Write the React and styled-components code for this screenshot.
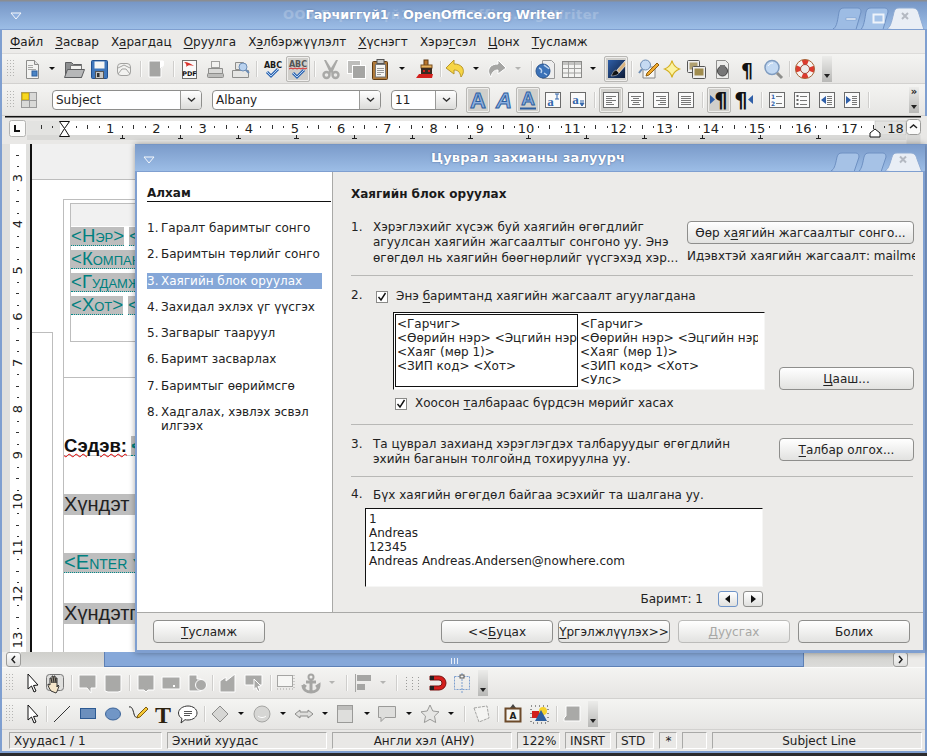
import React from 'react';
import styled, { createGlobalStyle } from 'styled-components';

const Global = createGlobalStyle`
  html, body { margin: 0; padding: 0; background: #2b2b2d; }
  body { width: 927px; height: 756px; overflow: hidden; font-family: "DejaVu Sans", sans-serif; font-size: 12px; color: #222; }
  #root { width: 927px; height: 756px; position: relative; overflow: hidden; }
  * { box-sizing: border-box; }
`;

const Win = styled.div`
  width: 927px; height: 753px; display: flex; flex-direction: column;
  background: #ecebe9; border: solid #7f9fd0; border-width: 0 2px 2px 2px; position: relative;
`;
const TitleBar = styled.div`
  height: 30px; margin: 0 -2px; flex: none; position: relative; overflow: hidden;
  background: linear-gradient(#8a8d92 0, #8a8d92 1px, #7797c6 2px, #9cbde6 100%);
  border-bottom: 1px solid #7f9fd0;
  display: flex; align-items: center; justify-content: center;
`;
const TitleText = styled.span`
  color: #fff; font-weight: bold; font-size: 12.8px; white-space: nowrap;
  margin-left: -60px; text-shadow: 0 0 2px rgba(70,100,150,.7);
`;
const TitleGhost = styled.span`
  position: absolute; left: 283px; top: 7px; color: #fff; opacity: .2; font-weight: bold; font-size: 13px;
  letter-spacing: .5px; white-space: nowrap;
`;
const MenuGlyph = styled.svg`
  position: absolute; left: ${p => p.$x}px; top: 12px;
`;
const Tabs = styled.svg`
  position: absolute; right: 0; bottom: 0;
`;
const Menu = styled.div`
  height: 24px; flex: none; display: flex; align-items: center; gap: 12px; padding: 1px 0 0 8px;
  background: #ecebe9; border-bottom: 1px solid #dcdbd9; white-space: nowrap; color: #1c1c1c;
`;
const U = styled.span`text-decoration: underline; text-underline-offset: 1.5px;`;
const ToolRow = styled.div`
  height: ${p => p.$h}px; flex: none; display: flex; align-items: center; padding-left: 0;
  background: linear-gradient(#f4f4f2, #e6e5e3); border-bottom: 1px solid #d2d1cf;
`;
const Slot = styled.div`
  width: ${p => p.$w}px; flex: none; margin-left: ${p => p.$ml}px; display: flex; align-items: center; justify-content: center;
`;
const Pressed = styled.div`
  width: 24px; height: 26px; flex: none; display: flex; align-items: center; justify-content: center;
  background: ${p => (p.$on ? '#d0cfcb' : 'transparent')};
  border: ${p => (p.$on ? '1px solid #b9b8b5' : '1px solid transparent')}; border-radius: 2px;
  box-shadow: ${p => (p.$on ? 'inset 0 0 0 1px #efeeec' : 'none')};
  svg { flex: none; overflow: visible; }
`;
const Sep = styled.div`width: 1px; height: 16px; background: #cfcecc; box-shadow: 1px 0 0 #fbfbfa;`;
const Grip = styled.div`
  width: 7px; height: 18px;
  background-image: radial-gradient(circle at .5px .5px, #b4b4b2 .7px, transparent .8px);
  background-size: 3px 3px;
`;
const Overflow = styled.div`
  width: 10px; height: 26px; position: relative; display: flex; flex-direction: column; justify-content: flex-end; align-items: center;
  background: linear-gradient(#ececea, #b8b8b6); padding-bottom: 4px;
  &::after { content: ""; border: 3px solid transparent; border-top: 4px solid #222; border-bottom: 0; }
`;
const OverflowMore = styled(Overflow)`
  justify-content: space-between; padding-top: 0;
`;
const Chevrons = styled.span`font-size: 10px; font-weight: bold; line-height: 10px; color: #222;`;
const Combo = styled.div`
  display: flex; width: ${p => p.$w}px; height: 20px; flex: none;
  border: 1px solid #8e8e8c; border-radius: 4px; background: #fff; overflow: hidden;
`;
const ComboText = styled.div`
  flex: 1; padding-left: 3px; line-height: 18px; font-size: 12px; color: #222; white-space: nowrap; overflow: hidden;
`;
const ComboBtn = styled.div`
  width: 21px; flex: none; border-left: 1px solid #9a9a98; display: flex; align-items: center; justify-content: center;
  background: linear-gradient(#fff, #dcdcda);
`;
const RulerRow = styled.div`height: 28px; flex: none; background: #e9e8e6; margin-left: 0; position: relative;`;
const RulerSvg = styled.svg`display: block;`;
const DocRow = styled.div`height: 508px; flex: none; display: flex; background: #e4e4e2;`;
const DocView = styled.div`flex: 1; background: #fff; border-left: 2px solid #111; overflow: hidden; position: relative;`;
const TopBand = styled.div`height: 36px; background: #f0f0f0; border-bottom: 1px solid #bdbdbd;`;
const PageWrap = styled.div`display: flex;`;
const Gutter = styled.div`
  width: 22px; height: 330px; margin-top: 152px; border: solid #bdbdbd; border-width: 1px 1px 0 0;
`;
const Page = styled.div`
  margin: 19px 0 0 10px; width: 900px; height: 460px; border: solid #bdbdbd; border-width: 1px 0 0 1px; overflow: hidden;
`;
const AddressBox = styled.div`
  margin: 3px 0 0 6px; width: 400px; height: 139px; border: 1px solid #bdbdbd; padding-top: 23px;
  background: linear-gradient(#f1f1f1 0, #f1f1f1 22px, #fff 22px);
  display: flex; flex-direction: column; gap: 4px;
`;
const FieldLine = styled.div`display: flex; gap: 5px; height: 19px;`;
const Field = styled.span`
  background: #bebebe; color: #00807f; font-family: "Liberation Sans", sans-serif; font-size: 18.5px; font-variant: small-caps;
  height: ${p => p.$h || 19}px; line-height: ${p => (p.$h || 19) - 1}px; white-space: nowrap; border-bottom: 1px dotted #008a8a;
`;
const AddressEnd = styled.div`margin-top: 35px; height: 1px; background: #bdbdbd;`;
const SubjectRow = styled.div`
  margin-top: 58px; height: 20px; display: flex; gap: 4px; border-bottom: 1px solid #c8c8c8; font-family: "Liberation Sans", sans-serif;
  font-size: 18.5px; font-weight: bold; color: #111; line-height: 19px;
`;
const Wavy = styled.span`text-decoration: underline wavy #e00000 1px; text-underline-offset: 1px;`;
const TextLine = styled.div`
  height: 21px; margin-top: ${p => p.$mt}px; background: #bebebe; font-family: "Liberation Sans", sans-serif; font-size: 20px; line-height: 21px;
  color: #222; white-space: nowrap;
`;
const EnterLine = styled.div`
  height: 20px; margin-top: ${p => p.$mt}px; background: #bebebe; font-family: "Liberation Sans", sans-serif; font-size: 20px; font-variant: small-caps; line-height: 19px;
  color: #00807f; white-space: nowrap; border-bottom: 1px dotted #008a8a;
`;
const HScroll = styled.div`height: 16px; flex: none; display: flex; padding: 0 0 0 4px; background: #ecebe9; border-bottom: 1px solid #fafaf9;`;
const ScrollBtn = styled.div`
  width: 15px; height: 15px; flex: none; border: 1px solid #9b9b99; border-radius: 3px; background: linear-gradient(#fff, #dededc);
  display: flex; align-items: center; justify-content: center;
`;
const ScrollTrack = styled.div`width: ${p => p.$w}px; flex: none; height: 15px; background: linear-gradient(#cfcfcb, #dcdcda);`;
const ScrollThumb = styled.div`
  width: ${p => p.$w}px; flex: none; height: 15px; background: #86a8d9; border: solid #5d80b5; border-width: 0 1px 1px 1px;
  display: flex; align-items: center; justify-content: center; gap: 2px; padding-top: 3px;
`;
const GripLine = styled.i`display: block; width: 1px; height: 6px; background: #e8eef8;`;
const StatusBar = styled.div`
  height: 21px; flex: none; display: flex; gap: 5px; align-items: center; padding: 0 6px 0 7px; background: #e9e8e6;
`;
const Cell = styled.div`
  width: ${p => p.$w}px; flex: none; height: 17px; border: 1px solid; border-color: #a9a9a7 #fff #fff #a9a9a7;
  padding-left: ${p => p.$pl || 4}px; line-height: 16px; font-size: 12px; white-space: nowrap; color: #222; overflow: hidden;
  text-align: ${p => p.$center ? 'center' : 'left'};
`;

/* ---------- dialog ---------- */
const Dialog = styled.div`
  position: absolute; left: 133px; top: 144px; width: 790px; height: 509px; background: #ecebe9;
  border: solid #7f9fd0; border-width: 0 2px 3px 2px; display: flex; flex-direction: column;
  box-shadow: 0 0 6px rgba(0,0,0,.35);
`;
const DialogTitle = styled.div`
  height: 28px; flex: none; margin: 0 -2px; position: relative; display: flex; align-items: center; justify-content: center;
  background: linear-gradient(#6f8fbf 0, #7b9bca 1px, #9cbde6 100%); border-bottom: 1px solid #7f9fd0;
`;
const DialogTitleText = styled.span`
  color: #fff; font-weight: bold; font-size: 13px; letter-spacing: .2px; margin-left: -4px; text-shadow: 0 0 2px rgba(50,80,130,.8);
`;
const DialogBody = styled.div`flex: 1; display: flex; min-height: 0;`;
const StepsPanel = styled.div`
  width: 196px; flex: none; background: #fff; border-right: 1px solid #a9a9a7; padding: 14px 0 0 10px;
`;
const StepsTitle = styled.div`
  font-weight: bold; line-height: 15px; height: 16px; border-bottom: 1px solid #111; width: 184px; color: #1a1a1a;
`;
const StepList = styled.div`margin-top: 18px; width: 175px; display: flex; flex-direction: column; gap: 10.25px;`;
const Step = styled.div`
  display: flex; line-height: 16px; min-height: 16px;
  background: ${p => (p.$on ? '#85a7d8' : 'transparent')}; color: ${p => (p.$on ? '#fff' : '#222')};
`;
const StepNum = styled.span`width: 14px; flex: none;`;
const StepText = styled.span`line-height: 14.5px; padding-top: 1px; flex: 1;`;
const Content = styled.div`flex: 1; padding: 14px 10px 0 18px; min-width: 0; color: #222;`;
const Heading = styled.div`font-weight: bold; line-height: 16px; color: #1a1a1a;`;
const Section = styled.div`
  height: ${p => p.$h}px; flex: none; padding-top: ${p => p.$pt}px; display: flex; align-items: flex-start;
`;
const Block = styled.div`padding-top: ${p => p.$pt}px; height: ${p => p.$h}px;`;
const Num = styled.div`width: ${p => p.$w || 22}px; flex: none; line-height: 15.5px;`;
const Para = styled.div`width: ${p => p.$w}px; flex: none; line-height: 15.4px; white-space: nowrap;`;
const Side = styled.div`width: 228px; flex: none; margin-left: ${p => p.$ml}px; padding-top: 1px;`;
const Btn = styled.div`
  width: ${p => p.$w}px; height: 23px; flex: none; display: flex; align-items: center; justify-content: center;
  margin-top: ${p => p.$mt || 0}px;
  border: 1px solid ${p => (p.$off ? '#bcbcba' : '#8e8e8c')}; border-radius: 4px; white-space: nowrap; overflow: hidden;
  background: linear-gradient(#fff, #e2e2e0); color: ${p => (p.$off ? '#a8a8a6' : '#222')};
`;
const Clip = styled.div`margin-top: 4px; white-space: nowrap; overflow: hidden; line-height: 16px;`;
const Rule = styled.div`height: 1px; background: #b8b8b6;`;
const CheckRow = styled.div`
  display: flex; align-items: center; gap: 8px; margin-left: ${p => p.$ml || 0}px; margin-top: ${p => p.$mt || 0}px; line-height: 16px;
`;
const Check = styled.div`
  width: 12px; height: 12px; flex: none; border: 1px solid #8a8a88; background: #fff; margin-top: 2px; display: flex; align-items: center; justify-content: center;
`;
const PreviewRow = styled.div`display: flex; align-items: flex-end; gap: 14px; margin: 8px 0 0 42px;`;
const Preview = styled.div`
  width: ${p => p.$w}px; height: ${p => p.$h}px; flex: none; background: #fff; overflow: hidden;
  border: 1px solid; border-color: #111 #f6f6f5 #f6f6f5 #111;
  display: flex; line-height: 14px; white-space: nowrap;
`;
const RecordPreview = styled(Preview)`margin: 5px 0 0 14px;`;
const AddressCard = styled.div`
  width: ${p => p.$w}px; flex: none; height: ${p => p.$h}px; margin: 1px 0 0 ${p => p.$ml}px; padding: 2px 0 0 1px; overflow: hidden;
  border: ${p => (p.$sel ? '1px solid #111' : '1px solid transparent')};
`;
const Record = styled.div`margin: 0; padding: 3px 0 0 3px;`;
const NavRow = styled.div`
  width: 412px; display: flex; justify-content: flex-end; align-items: center; margin-top: 4px; height: 16px;
`;
const NavLabel = styled.span`margin-right: 15px; line-height: 16px;`;
const NavBtn = styled.div`
  width: 20px; height: 16px; margin-left: ${p => p.$ml || 0}px; border: 1px solid ${p => p.$focus ? '#6f94c8' : '#8e8e8c'}; border-radius: 3px;
  background: linear-gradient(#fff, #e0e0de); display: flex; align-items: center; justify-content: center;
`;
const Footer = styled.div`
  height: 38px; flex: none; border-top: 1px solid #a9a9a7; display: flex; align-items: center; padding: 0 13px 0 16px; gap: 8px; background: #ecebe9;
`;
const FooterGap = styled.div`flex: 1;`;
const FooterNarrow = styled.div`margin-left: -3px;`;

/* ---------- icons ---------- */
const G = { fill: '#a9a9a7', stroke: '#fff', strokeWidth: 1 };
const txt = { fontFamily: '"DejaVu Sans", sans-serif', fontWeight: 'bold' };
const aProps = { fontFamily: '"Liberation Sans", sans-serif', fontWeight: 'bold', fontSize: 22, fill: '#8db0e0', stroke: '#2e5f9f', strokeWidth: 1, textAnchor: 'middle' };
const lines = (arr, color = '#777') => arr.map(([x1, y1, x2], i) => <line key={i} x1={x1} y1={y1 + .5} x2={x2} y2={y1 + .5} stroke={color} />);
const boxed = (ch) => <><rect x="4.5" y="4.5" width="15" height="15" fill="#fafafa" stroke="#6b6b6b" />{ch}</>;
const GrayBlock = ({ d }) => <path d={d} {...G} />;

const icons = {
  drop: <path d="M9 10h6l-3 3z" fill="#111" />,
  dropOff: <path d="M9 10h6l-3 3z" fill="#b4b4b2" />,
  doc: <><path d="M6.5 3.5h8l4 4v14h-12z" fill="#f3f3f1" stroke="#8c8c8a" /><path d="M14.5 3.5v4h4" fill="#ddd" stroke="#8c8c8a" />{lines([[8, 8, 13], [8, 10, 13], [8, 12, 16]], '#a8a8a6')}<rect x="12" y="14" width="5" height="5" fill="#4a84c4" stroke="#2c5f9e" /></>,
  open: <><path d="M3.5 5.5h6l2 2h8v13h-16z" fill="#8d8f90" stroke="#5d5e60" /><path d="M8.5 8.5h11v5h-11z" fill="#f2f2f0" stroke="#777" /><path d="M2.5 20.5l3-8h17l-3 8z" fill="#b6b7b8" stroke="#5d5e60" /></>,
  save: <><rect x="4.5" y="3.5" width="16" height="18" rx="1" fill="#3f77bc" stroke="#22518f" /><rect x="7.5" y="4.5" width="10" height="7" fill="#f6f6f4" /><rect x="8.5" y="14.5" width="8" height="7" fill="#c8c8c6" stroke="#555" /><rect x="10" y="16" width="2.5" height="4" fill="#333" /></>,
  mail: <><rect x="5.5" y="6.5" width="13" height="12" rx="3.5" fill="#f2f2f0" stroke="#a2a2a0" /><path d="M6 11l6-3 6 3M6 17l4-5h4l4 5" fill="none" stroke="#a2a2a0" /></>,
  edit: <><path d="M5 4h14v5l-2 3v8H5z" fill="#a5a5a3" stroke="#fff" /><path d="M16 4h4v4l-4 4z" fill="#fff" /></>,
  pdf: <><rect x="5.5" y="3.5" width="14" height="18" fill="#fafafa" stroke="#6f6f6d" /><path d="M7 5c4 0 7 2 10 4-4-1-6-1-8 1 1-2 0-4-2-5z" fill="#d9332c" /><text x="12.5" y="19" fontSize="6.5" textAnchor="middle" fill="#111" style={txt}>PDF</text></>,
  print: <><rect x="8.5" y="4.5" width="8" height="6" fill="#f2f2f0" stroke="#a0a09e" /><path d="M5.5 11.5h14v6h-14z" fill="#dadad8" stroke="#8e8e8c" /><rect x="4.5" y="16.5" width="16" height="4" rx="1" fill="#bdbdbb" stroke="#8e8e8c" /></>,
  preview: <><path d="M7.5 5.5h8v7h-8zM4.5 13.5h16v7h-16z" fill="#e6e6e4" stroke="#8e8e8c" /><circle cx="15" cy="10" r="4" fill="#b9d2ef" stroke="#6d8db5" /><path d="M18 13l3 3" stroke="#6d8db5" strokeWidth="2" /></>,
  spell: <><text x="12" y="11" fontSize="8" textAnchor="middle" fill="#1a1a1a" style={txt}>ABC</text><path d="M6 15l4 4 7-7" fill="none" stroke="#2d66b3" strokeWidth="3" /><path d="M6 15l4 4 7-7" fill="none" stroke="#b9d4f2" strokeWidth="1" /></>,
  autospell: <><text x="12" y="10" fontSize="8" textAnchor="middle" fill="#555" style={txt}>ABC</text><path d="M3 12l2-1 2 1 2-1 2 1 2-1 2 1 2-1 2 1 2-1" fill="none" stroke="#d22" /><path d="M7 16l4 4 7-7" fill="none" stroke="#2d66b3" strokeWidth="3" /><path d="M7 16l4 4 7-7" fill="none" stroke="#b9d4f2" strokeWidth="1" /></>,
  cut: <><path d="M7 3l5 8 5-8h2l-5 11 1 2-2 2-1-3-1 3-2-2 1-2L5 3z" fill="#a9a9a7" /><circle cx="7.5" cy="18" r="3" fill="none" stroke="#a9a9a7" strokeWidth="2.4" /><circle cx="16.5" cy="18" r="3" fill="none" stroke="#a9a9a7" strokeWidth="2.4" /></>,
  copy: <><rect x="3.5" y="3.5" width="13" height="13" fill="#bdbdbb" stroke="#fff" /><rect x="8.5" y="8.5" width="13" height="13" fill="#a5a5a3" stroke="#fff" /></>,
  paste: <><rect x="4.5" y="4.5" width="15" height="18" rx="1" fill="#b07a3a" stroke="#5e3b14" /><rect x="7.5" y="7.5" width="10" height="12.5" fill="#f6f6f4" stroke="#777" /><rect x="9" y="2.5" width="7" height="4" fill="#c7c7c5" stroke="#555" />{lines([[9, 11, 16], [9, 13, 16], [9, 15, 16], [9, 17, 13]], '#999')}</>,
  brush: <><rect x="11" y="3" width="4" height="6" fill="#b8762f" stroke="#5e3b14" /><rect x="8" y="8" width="11" height="3" fill="#e8b25e" stroke="#7a5020" /><rect x="8" y="11" width="11" height="6" fill="#3a2a20" /><path d="M3 21l3-4h14l-1 4z" fill="#d3201d" /><rect x="10" y="13" width="2" height="2" fill="#d3201d" /><rect x="15" y="13" width="2" height="2" fill="#d3201d" /></>,
  undo: <path d="M11 3L3 11l8 6v-4c4 0 6 2 7 7 3-4 3-7 1-10-2-2-4-3-8-3z" fill="#f6d545" stroke="#b8962a" />,
  redo: <path d="M13 3l8 8-8 6v-4c-4 0-6 2-7 7-3-4-3-7-1-10 2-2 4-3 8-3z" fill="#a5a5a3" stroke="#fff" />,
  nav: <><path d="M9.5 3.5h9l3 3v15h-12z" fill="#eee" stroke="#999" /><circle cx="10" cy="14" r="7" fill="#3b72b8" stroke="#2a5590" /><path d="M6 11c3 1 3 3 2 5M11 8c2 2 4 2 5 4M11 16l3 2" fill="none" stroke="#bcd3ee" strokeWidth="1.5" /></>,
  table: <><rect x="2.5" y="4.5" width="19" height="16" fill="#f3f3f1" stroke="#8a8a88" /><rect x="3" y="5" width="18" height="3" fill="#c3c3c1" /><path d="M8.5 5v15M14.5 5v15M3 11.5h18M3 16h18" stroke="#a0a09e" /></>,
  draw: <><defs><linearGradient id="drawG" x1="0" y1="0" x2="1" y2="1"><stop offset="0" stopColor="#2f5fa8" /><stop offset="1" stopColor="#0c1a36" /></linearGradient></defs><rect x="4" y="3" width="17" height="18" fill="url(#drawG)" /><path d="M21 4l-8 9 2 3 7-8z" fill="#d8b37e" stroke="#fff" strokeWidth=".6" /><path d="M12 13c-3 1-3 3-5 6 4 0 7-1 8-3z" fill="#111" stroke="#ddd" strokeWidth=".5" /></>,
  findpen: <><path d="M7 10h12v11H7z" fill="#f6f6f4" stroke="#888" /><circle cx="9.5" cy="8" r="5" fill="#c5daf2" stroke="#6d8db5" /><path d="M6 12l-3 4" stroke="#6d8db5" strokeWidth="2" /><path d="M21 6l2 2-10 10-3 1 1-3z" fill="#f0a92d" stroke="#8e5e10" /></>,
  gallery: <path d="M12 3.500c.8 4 2.500 6.500 7.500 8.500-5 2-6.700 4.500-7.500 8.500-.8-4-2.500-6.500-7.500-8.500 5-2 6.700-4.500 7.500-8.500z" fill="#fbf3a2" stroke="#d5b021" strokeWidth="1.200" />,
  sources: <><rect x="3.500" y="3.500" width="12" height="12" rx="1" fill="#eee" stroke="#555" /><rect x="5.500" y="5.500" width="8" height="7" fill="#b0a070" /><rect x="8.500" y="9.500" width="13" height="12" rx="1" fill="#eee" stroke="#555" /><rect x="10.500" y="11.500" width="9" height="7" fill="#a08c4e" /></>,
  navi: <><path d="M6.500 3.500h9l3 3v15h-12z" fill="#ededeb" stroke="#8e8e8c" /><circle cx="12.500" cy="14" r="5" fill="#777" stroke="#444" /><rect x="10" y="8" width="5" height="2" fill="#777" /></>,
  para: <text x="12" y="20" fontSize="19" textAnchor="middle" fill="#111" style={txt}>¶</text>,
  zoom: <><circle cx="11" cy="10.500" r="7" fill="#c3d9f2" stroke="#7f9cc0" strokeWidth="1.500" /><path d="M16 16l5 5" stroke="#8e8e8c" strokeWidth="3" /><path d="M7 9c1-2 3-3 5-3" stroke="#fff" fill="none" /></>,
  help: <><circle cx="12" cy="12" r="7" fill="none" stroke="#f6f4f0" strokeWidth="5" /><circle cx="12" cy="12" r="7" fill="none" stroke="#dd3a2e" strokeWidth="5" strokeDasharray="5.500 5.500" strokeDashoffset="2.750" /><circle cx="12" cy="12" r="9.500" fill="none" stroke="#a5663a" /><circle cx="12" cy="12" r="4.500" fill="#ecebe9" stroke="#a5402e" /></>,
  styles: <><rect x="4.500" y="4.500" width="15" height="15" fill="#d9d9d7" stroke="#999" /><rect x="5" y="5" width="7" height="7" fill="#f7d81e" stroke="#c9a400" /><path d="M12.500 5v14M5 12.500h14" stroke="#999" /></>,
  bold: <text x="12" y="19.500" {...aProps}>A</text>,
  italic: <text x="12" y="19.500" {...aProps} fontStyle="italic">A</text>,
  under: <><text x="12" y="17" {...aProps} fontSize="19">A</text><path d="M4 20.500h16" stroke="#2e5f9f" strokeWidth="2" /></>,
  sup: boxed(<><text x="9.500" y="18" fontSize="13" fontWeight="bold" fontFamily='"Liberation Serif", serif' fill="#3467ab" textAnchor="middle">a</text><path d="M14 6h4M16 6v5M14 11h4" stroke="#3467ab" /></>),
  sub: boxed(<><text x="9.500" y="16" fontSize="13" fontWeight="bold" fontFamily='"Liberation Serif", serif' fill="#3467ab" textAnchor="middle">a</text><path d="M14 13h4M14 15h4l-2 3z" stroke="#3467ab" fill="#3467ab" /></>),
  left: boxed(lines([[7, 8, 17], [7, 10, 13], [7, 12, 17], [7, 14, 13], [7, 16, 15]])),
  center: boxed(lines([[7, 8, 17], [9, 10, 15], [7, 12, 17], [9, 14, 15], [8, 16, 16]])),
  right: boxed(lines([[7, 8, 17], [11, 10, 17], [7, 12, 17], [11, 14, 17], [9, 16, 17]])),
  justify: boxed(lines([[7, 8, 17], [7, 10, 17], [7, 12, 17], [7, 14, 17], [7, 16, 17]])),
  ltr: <><text x="14" y="20" fontSize="21" textAnchor="middle" fill="#111" style={txt}>¶</text><path d="M3 7l5 4.500-5 4.500z" fill="#2f5fa8" /></>,
  rtl: <><text x="9" y="20" fontSize="21" textAnchor="middle" fill="#111" style={txt}>¶</text><path d="M21 7l-5 4.500 5 4.500z" fill="#2f5fa8" /></>,
  num: boxed(<>{lines([[11, 8, 17], [11, 15, 17]])}<text x="8" y="10.500" fontSize="6" fill="#2f5fa8" textAnchor="middle" style={txt}>1</text><text x="8" y="17.500" fontSize="6" fill="#2f5fa8" textAnchor="middle" style={txt}>2</text></>),
  bullet: boxed(<>{lines([[10, 8, 17], [10, 12, 17], [10, 16, 17]])}{[7, 11, 15].map(y => <rect key={y} x="6.500" y={y} width="2" height="2" fill="#666" />)}</>),
  outdent: boxed(<>{lines([[12, 8, 17], [12, 10, 17], [12, 12, 17], [12, 14, 17], [12, 16, 17]])}<path d="M11 8v8l-5-4z" fill="#2f5fa8" /></>),
  indent: boxed(<>{lines([[12, 8, 17], [12, 10, 17], [12, 12, 17], [12, 14, 17], [12, 16, 17]])}<path d="M6 8v8l5-4z" fill="#2f5fa8" /></>),
  arrow: <path d="M9 3v15l3.500-3 2.500 6 2-1-2.500-5.500 4.500-.5z" fill="#fff" stroke="#111" />,
  hand: <><rect x="3.500" y="3.500" width="17" height="16" rx="3" fill="#dfdfdd" stroke="#777" /><path d="M8 20c-2-3-3-5-3-7l2 1V7l1 0 1 5V5l1 0 1 7V5l1 0 1 7 0-5 1 0v9l1-2 1 1c-1 3-2 6-3 7z" fill="#f4e5c9" stroke="#222" strokeWidth=".9" /></>,
  g1: <GrayBlock d="M3 4h17v13h-5v5l-4-5H3z" />,
  g2: <GrayBlock d="M4 4h16v16l-3 1H7l-3-1z" />,
  g3: <GrayBlock d="M4 4h16v15h-6l-2 2-2-2H4z" />,
  g4: <><GrayBlock d="M3 6h18v12H3z" /><rect x="14" y="14" width="2" height="2" fill="#fff" /></>,
  g5: <><GrayBlock d="M4 4h8v4h4v12H4z" /><circle cx="16" cy="14" r="5.500" {...G} /></>,
  g6: <GrayBlock d="M3 10l6-4v4l9-7v18H3z" />,
  g7: <><GrayBlock d="M3 4h17v10H3z" /><path d="M12 8l7 7-3 .5 2 4-2 1-2-4-2 2z" fill="#a9a9a7" stroke="#fff" /></>,
  frame: <><rect x="3.500" y="4.500" width="15" height="11" fill="#f6f6f4" stroke="#a5a5a3" /><path d="M3 18h16M20 4v13" stroke="#a5a5a3" strokeDasharray="1 2" /></>,
  anchor: <><circle cx="12" cy="6" r="2.500" fill="none" stroke="#a5a5a3" strokeWidth="2" /><path d="M12 8v12M7 11h10M4 14c0 5 4 7 8 7s8-2 8-7l-3 2M4 14l3 2" fill="none" stroke="#a5a5a3" strokeWidth="3" /></>,
  align: <><path d="M4.500 3v18" stroke="#a5a5a3" /><rect x="6" y="4" width="14" height="6" fill="#a5a5a3" /><rect x="6" y="13" width="8" height="6" fill="#a5a5a3" /></>,
  grid: <>{[6, 12, 18].flatMap(y => [6, 12, 18].map(x => <rect key={x + '-' + y} x={x} y={y} width="1" height="1" fill="#9a9a98" />))}{[9, 15].flatMap(y => [6, 12, 18].map(x => <rect key={x + '_' + y} x={x} y={y} width="1" height="1" fill="#9a9a98" />))}</>,
  magnet: <><path d="M4 5h9a7 7 0 0 1 0 14H4v-4h9a3 3 0 0 0 0-6H4z" fill="#d41f1c" stroke="#7a1210" /><rect x="4" y="5" width="4" height="4" fill="#222" /><rect x="4" y="15" width="4" height="4" fill="#222" /></>,
  points: <><rect x="4.500" y="5.500" width="15" height="13" fill="none" stroke="#7d9fcf" strokeDasharray="2 1" /><path d="M12 2v20" stroke="#7d9fcf" strokeDasharray="2 1" /><rect x="10" y="4" width="4" height="3" fill="#f2f2f0" stroke="#555" /></>,
  line: <path d="M4 20L20 4" stroke="#333" strokeWidth="1" />,
  rect: <rect x="4.500" y="6.500" width="15" height="10" fill="#6b8fbd" stroke="#2d5a92" />,
  ellipse: <ellipse cx="12" cy="12" rx="7.500" ry="6" fill="#7196c6" stroke="#3a6398" />,
  curve: <><path d="M3 5c3-1 4 3 5 7s3 4 5 2" fill="none" stroke="#222" /><path d="M20 5l2 2-8 8-3 1 1-3z" fill="#f5c734" stroke="#7f5d10" /></>,
  ttext: <text x="12" y="21" fontSize="24" textAnchor="middle" fill="#2c2210" fontWeight="bold" fontFamily='"Liberation Serif", serif'>T</text>,
  callout: <><path d="M12 4c5 0 9 3 9 7s-4 7-9 7c-1 0-2 0-3-.3L5 21l1-4.500c-2-1-3.500-3-3.500-5.500 0-4 4.500-7 9.500-7z" fill="#fff" stroke="#333" />{lines([[8, 9, 16], [8, 11, 16], [8, 13, 14]], '#555')}</>,
  diamond: <path d="M12 4l8 8-8 8-8-8z" fill="#d6d6d4" stroke="#8c8c8a" />,
  smile: <><circle cx="12" cy="12" r="8" fill="#d6d6d4" stroke="#a5a5a3" /><path d="M8 14c2 2 6 2 8 0" stroke="#fff" fill="none" /></>,
  dbl: <path d="M3 12l5-4v2h8V8l5 4-5 4v-2H8v2z" fill="#dededc" stroke="#8c8c8a" />,
  flow: <><rect x="4.500" y="3.500" width="15" height="17" fill="#dededc" stroke="#9a9a98" /><rect x="5" y="4" width="14" height="4" fill="#bdbdbb" /></>,
  comment: <path d="M3.500 4.500h17v11H10l-4 4v-4H3.500z" fill="#dededc" stroke="#9a9a98" />,
  star: <path d="M12 3l2.800 6 6.200.8-4.500 4.300 1.200 6.400-5.700-3.200-5.700 3.200 1.200-6.400L3 9.800 9.200 9z" fill="#e6e6e4" stroke="#9a9a98" />,
  poly: <path d="M5 6l13-2 2 12-10 4z" fill="#f4f4f2" stroke="#a5a5a3" strokeDasharray="3 1" />,
  textbox: <><path d="M12 2l3 4H9z" fill="#444" /><rect x="4.500" y="6.500" width="15" height="13" fill="#f6f6f4" stroke="#6c4a2a" strokeWidth="2" /><text x="12" y="17" fontSize="9" textAnchor="middle" fill="#222" style={txt}>A</text></>,
  image: <><rect x="4" y="4" width="17" height="17" fill="none" stroke="#333" strokeDasharray="1 3" /><rect x="5" y="9" width="9" height="7" fill="#d21f1b" /><circle cx="16" cy="9" r="4" fill="#f5d22e" /><path d="M14 8l6 11H8z" fill="#2d5e9e" /></>,
  gBlock: <GrayBlock d="M6 4h14v15H4v-3l2-2z" />,
};

const Icon = ({ n }) => <svg width="24" height="24" viewBox="0 0 24 24">{icons[n]}</svg>;

const Chevron = () => <svg width="9" height="6" viewBox="0 0 9 6"><path d="M1 1l3.500 3L8 1" fill="none" stroke="#333" strokeWidth="1.400" /></svg>;

function Items({ list, h }) {
  let right = 2;
  return (
    <ToolRow $h={h}>
      {list.map((it, i) => {
        const [c, n, arg] = it;
        const w = n === 'combo' ? arg.w : 24;
        const left = n === 'combo' ? c : c - 12;
        const ml = left - right;
        right = left + w;
        return (
          <Slot key={i} $w={w} $ml={ml}>
            {n === 'sep' ? <Sep /> : n === 'grip' ? <Grip /> : n === 'over' ? <Overflow /> : n === 'more' ? <OverflowMore><Chevrons>»</Chevrons></OverflowMore> : n === 'combo' ? (
              <Combo $w={arg.w}><ComboText>{arg.t}</ComboText><ComboBtn><Chevron /></ComboBtn></Combo>
            ) : (
              <Pressed $on={arg === 1}><Icon n={n} /></Pressed>
            )}
          </Slot>
        );
      })}
    </ToolRow>
  );
}

const bar1 = [[10, 'grip'], [32, 'doc'], [52, 'drop'], [74, 'open'], [99, 'save'], [124, 'mail'], [140, 'sep'], [156, 'edit'], [173, 'sep'], [189, 'pdf'], [215, 'print'], [240, 'preview'], [256, 'sep'], [273, 'spell'], [298, 'autospell', 1], [314, 'sep'], [331, 'cut'], [356, 'copy'], [380, 'paste'], [402, 'drop'], [425, 'brush'], [440, 'sep'], [455, 'undo'], [476, 'drop'], [497, 'redo'], [518, 'dropOff'], [531, 'sep'], [545, 'nav'], [572, 'table'], [593, 'drop'], [616, 'draw', 1], [631, 'sep'], [648, 'findpen'], [672, 'gallery'], [696, 'sources'], [722, 'navi'], [747, 'para'], [773, 'zoom'], [789, 'sep'], [805, 'help'], [827, 'over']];
const bar2 = [[10, 'grip'], [29, 'styles'], [52, 'combo', { w: 150, t: 'Subject' }], [212, 'combo', { w: 169, t: 'Albany' }], [391, 'combo', { w: 66, t: '11' }], [478, 'bold', 1], [504, 'italic'], [528, 'under', 1], [553, 'sup'], [578, 'sub'], [594, 'sep'], [611, 'left', 1], [636, 'center'], [661, 'right'], [686, 'justify'], [702, 'sep'], [719, 'ltr', 1], [744, 'rtl'], [761, 'sep'], [777, 'num'], [802, 'bullet'], [827, 'outdent'], [852, 'indent'], [868, 'sep'], [914, 'more']];
const bar3 = [[9, 'grip'], [31, 'arrow'], [55, 'hand'], [71, 'sep'], [88, 'g1'], [113, 'g2'], [129, 'sep'], [146, 'g3'], [171, 'g4'], [197, 'g5'], [212, 'sep'], [229, 'g6'], [254, 'g7'], [270, 'sep'], [286, 'frame'], [311, 'anchor'], [332, 'dropOff'], [346, 'sep'], [363, 'align'], [383, 'dropOff'], [396, 'sep'], [412, 'grid'], [438, 'magnet'], [462, 'points'], [483, 'over']];
const bar4 = [[9, 'grip'], [31, 'arrow'], [46, 'sep'], [62, 'line'], [88, 'rect'], [113, 'ellipse'], [138, 'curve'], [163, 'ttext'], [188, 'callout'], [204, 'sep'], [220, 'diamond'], [241, 'drop'], [262, 'smile'], [283, 'drop'], [304, 'dbl'], [325, 'drop'], [345, 'flow'], [367, 'drop'], [387, 'comment'], [409, 'drop'], [430, 'star'], [451, 'drop'], [464, 'sep'], [481, 'poly'], [497, 'sep'], [513, 'textbox'], [539, 'image'], [556, 'sep'], [572, 'gBlock'], [593, 'over']];

function HRuler() {
  const cm = 46.2, x0 = 64;
  const marks = [];
  for (let i = -1; i <= 18; i++) {
    const x = x0 + i * cm;
    [.25, .5, .75].forEach(f => {
      const px = Math.round(x + f * cm);
      if (px > 30 && px < 900) marks.push(<rect key={`${i}-${f}`} x={px} y={f === .5 ? 9 : 10} width="1" height={f === .5 ? 4 : 2} fill="#333" />);
    });
  }
  const tabs = [122, 180, 238, 296, 354, 412, 470, 528, 586, 644, 702, 760, 818];
  return (
    <RulerSvg width="925" height="28" viewBox="2 0 925 28">
      <rect x="2" y="0" width="925" height="28" fill="#e9e8e6" />
      <rect x="5" y="0" width="916" height="1.500" fill="#111" />
      <rect x="27" y="5" width="33" height="14" fill="#e3e3e1" />
      <rect x="60" y="5" width="815" height="14" fill="#fff" />
      <rect x="875" y="5" width="31" height="14" fill="#e3e3e1" stroke="#b8b8b6" strokeWidth=".5" />
      <rect x="27" y="19" width="879" height="5" fill="#d9d9d7" />
      {marks}
      {Array.from({ length: 18 }, (_, k) => (
        <text key={k} x={x0 + (k + 1) * cm} y="17" fontSize="13" textAnchor="middle" fill="#222" fontFamily='"DejaVu Sans", sans-serif'>{k + 1}</text>
      ))}
      {tabs.map(x => <path key={x} d={`M${x}.5 19v3M${x - 2} 22.500h5`} stroke="#222" fill="none" />)}
      <rect x="9.500" y="4.500" width="16" height="16" rx="2" fill="#fbfbfa" stroke="#b3b3b1" />
      <path d="M15 9v6h5" fill="none" stroke="#111" strokeWidth="2" />
      <path d="M59.500 5.500h10L64.500 12.500l5 8h-10l5-8z" fill="#fff" stroke="#111" />
      <path d="M870 21v-4l5-4 5 4v4z" fill="#fff" stroke="#111" />
      <rect x="906.500" y="3.500" width="14" height="15" rx="3" fill="#fbfbfa" stroke="#9b9b99" />
      <path d="M910 12l3.500-3 3.500 3" fill="none" stroke="#222" strokeWidth="1.500" />
      <rect x="906.500" y="19" width="14" height="9" fill="#d8d8d6" />
    </RulerSvg>
  );
}

function VRuler() {
  const cm = 46.2, y3 = 178;
  const marks = [], nums = [];
  for (let k = 2; k <= 13; k++) {
    const y = y3 + (k - 3) * cm - 144;
    [.25, .5, .75].forEach(f => {
      const py = Math.round(y + f * cm);
      if (py > 0 && py < 508) marks.push(<rect key={`${k}-${f}`} x={f === .5 ? 14 : 15} y={py} width={f === .5 ? 3 : 2} height="1" fill="#333" />);
    });
    if (k >= 3) nums.push(<text key={k} transform={`translate(20 ${y}) rotate(-90)`} fontSize="13" textAnchor="middle" fill="#222" fontFamily='"DejaVu Sans", sans-serif'>{k}</text>);
  }
  return (
    <RulerSvg width="28" height="508" viewBox="0 0 28 508">
      <rect width="28" height="508" fill="#e0e0de" />
      <rect x="8" width="16" height="508" fill="#fff" />
      {marks}
      {nums}
    </RulerSvg>
  );
}

const MinMaxClose = ({ h, faded, full }) => (
  <Tabs width="96" height={h} viewBox={`0 0 96 ${h}`}>
    <path d={`M2 ${h}c3-2 4-4 6-${h - 9}c1-3 2-4 5-4h14c2 0 3 2 3 4l-6 ${h - 5}z`} fill={faded ? '#a6c2e6' : '#9dbce4'} stroke="#6e90c2" />
    <path d={`M30 ${h}c2-2 3-4 5-${h - 9}c1-3 2-4 5-4h14c2 0 3 2 3 4l-6 ${h - 5}z`} fill={faded ? '#a6c2e6' : '#a5c3e8'} stroke="#6e90c2" />
    <path d={`M56 ${h}c3-2 4-4 7-${h - 9}c1-3 2-4 5-4h14c3 0 5 2 6 6l6 ${h - 7}z`} fill="#e9eef5" stroke="#8fabd3" />
    {full && <rect x="15" y="15" width="10" height="2" fill="#eef3fa" stroke="#6e90c2" strokeWidth=".5" />}
    {full && <rect x="42.500" y="11.500" width="10" height="8" fill="none" stroke="#eef3fa" strokeWidth="2" />}
    <path d={`M71 ${h / 2 - 3}l6 6M77 ${h / 2 - 3}l-6 6`} stroke="#b4b9c2" strokeWidth="2" />
  </Tabs>
);

const Triangle = ({ x }) => (
  <MenuGlyph $x={x} width="12" height="8" viewBox="0 0 12 8"><path d="M1 1h10L6 7z" fill="#8fb0df" stroke="#f4f7fb" /></MenuGlyph>
);

function CheckMark() {
  return <svg width="10" height="10" viewBox="0 0 10 10"><path d="M1.500 5l2.500 3L8.500 1" fill="none" stroke="#111" strokeWidth="1.400" /></svg>;
}

export default function App() {
  return (
    <>
      <Global />
      <Win>
        <TitleBar>
          <Triangle x={10} />
          <TitleGhost>OOo Гарчиггүй1 - OpenOffice.org Writer</TitleGhost>
          <TitleText>Гарчиггүй1 - OpenOffice.org Writer</TitleText>
          <MinMaxClose h={26} full />
        </TitleBar>
        <Menu>
          <span><U>Ф</U>айл</span>
          <span><U>З</U>асвар</span>
          <span>Х<U>а</U>рагдац</span>
          <span><U>О</U>руулга</span>
          <span>Х<U>э</U>лбэржүүлэлт</span>
          <span><U>Х</U>үснэгт</span>
          <span>Хэрэ<U>г</U>сэл</span>
          <span><U>Ц</U>онх</span>
          <span><U>Т</U>усламж</span>
        </Menu>
        <Items list={bar1} h={30} />
        <Items list={bar2} h={32} />
        <RulerRow><HRuler /></RulerRow>
        <DocRow>
          <VRuler />
          <DocView>
            <TopBand />
            <PageWrap>
              <Gutter />
              <Page>
                <AddressBox>
                  <FieldLine><Field>&lt;Нэр&gt;</Field><Field>&lt;Овог&gt;</Field></FieldLine>
                  <FieldLine><Field>&lt;Компани&gt;</Field></FieldLine>
                  <FieldLine><Field>&lt;Гудамж&gt;</Field></FieldLine>
                  <FieldLine><Field>&lt;Хот&gt;</Field><Field>&lt;Улс&gt;</Field></FieldLine>
                </AddressBox>
                <AddressEnd />
                <SubjectRow><Wavy>Сэдэв:</Wavy><Field $h={20}>&lt;Тема&gt;</Field></SubjectRow>
                <TextLine $mt={38}>Хүндэт Ноён</TextLine>
                <EnterLine $mt={38}>&lt;Enter your text here&gt;</EnterLine>
                <TextLine $mt={30}>Хүндэтгэсэн</TextLine>
              </Page>
            </PageWrap>
          </DocView>
        </DocRow>
        <HScroll>
          <ScrollBtn><svg width="7" height="9" viewBox="0 0 7 9"><path d="M5 1L2 4.500 5 8" fill="none" stroke="#222" strokeWidth="1.500" /></svg></ScrollBtn>
          <ScrollTrack $w={83} />
          <ScrollThumb $w={700}><GripLine /><GripLine /><GripLine /></ScrollThumb>
          <ScrollTrack $w={89} />
          <ScrollBtn><svg width="7" height="9" viewBox="0 0 7 9"><path d="M2 1l3 3.500L2 8" fill="none" stroke="#222" strokeWidth="1.500" /></svg></ScrollBtn>
        </HScroll>
        <Items list={bar3} h={31} />
        <Items list={bar4} h={31} />
        <StatusBar>
          <Cell $w={153}>Хуудас1 / 1</Cell>
          <Cell $w={160}>Эхний хуудас</Cell>
          <Cell $w={180} $center>Англи хэл (АНУ)</Cell>
          <Cell $w={43}>122%</Cell>
          <Cell $w={46}>INSRT</Cell>
          <Cell $w={38}>STD</Cell>
          <Cell $w={18} $center $pl={1}>*</Cell>
          <Cell $w={25} />
          <Cell $w={210} $center>Subject Line</Cell>
        </StatusBar>
        <Dialog>
          <DialogTitle>
            <Triangle x={8} />
            <DialogTitleText>Цуврал захианы залуурч</DialogTitleText>
            <MinMaxClose h={23} faded />
          </DialogTitle>
          <DialogBody>
            <StepsPanel>
              <StepsTitle>Алхам</StepsTitle>
              <StepList>
                {['Гаралт баримтыг сонго', 'Баримтын төрлийг сонго', 'Хаягийн блок оруулах', 'Захидал эхлэх үг үүсгэх', 'Загварыг тааруул', 'Баримт засварлах', 'Баримтыг өөриймсгө', 'Хадгалах, хэвлэх эсвэл илгээх'].map((t, i) => (
                  <Step key={t} $on={i === 2}><StepNum>{i + 1}.</StepNum><StepText>{t}</StepText></Step>
                ))}
              </StepList>
            </StepsPanel>
            <Content>
              <Heading>Хаягийн блок оруулах</Heading>
              <Section $h={73} $pt={18}>
                <Num>1.</Num>
                <Para $w={292}>Хэрэглэхийг хүсэж буй хаягийн өгөгдлийг<br />агуулсан хаягийн жагсаалтыг сонгоно уу. Энэ<br />өгөгдөл нь хаягийн бөөгнөрлийг үүсгэхэд хэр...</Para>
                <Side $ml={22}>
                  <Btn $w={227}><span>Өөр х<U>а</U>ягийн жагсаалтыг сонго...</span></Btn>
                  <Clip>Идэвхтэй хаягийн жагсаалт: mailmerge</Clip>
                </Side>
              </Section>
              <Rule />
              <Block $pt={12} $h={148}>
                <CheckRow>
                  <Num $w={17}>2.</Num>
                  <Check><CheckMark /></Check>
                  <span>Энэ <U>б</U>аримтанд хаягийн жагсаалт агуулагдана</span>
                </CheckRow>
                <PreviewRow>
                  <Preview $w={372} $h={78}>
                    <AddressCard $w={183} $h={73} $ml={1} $sel>&lt;Гарчиг&gt;<br />&lt;Өөрийн нэр&gt; &lt;Эцгийн нэр&gt;<br />&lt;Хаяг (мөр 1)&gt;<br />&lt;ЗИП код&gt; &lt;Хот&gt;</AddressCard>
                    <AddressCard $w={181} $h={73} $ml={0}>&lt;Гарчиг&gt;<br />&lt;Өөрийн нэр&gt; &lt;Эцгийн нэр&gt;<br />&lt;Хаяг (мөр 1)&gt;<br />&lt;ЗИП код&gt; &lt;Хот&gt;<br />&lt;Улс&gt;</AddressCard>
                  </Preview>
                  <Btn $w={135}><span><U>Ц</U>ааш...</span></Btn>
                </PreviewRow>
                <CheckRow $ml={44} $mt={5}>
                  <Check><CheckMark /></Check>
                  <span>Хоосон <U>т</U>албараас бүрдсэн мөрийг хасах</span>
                </CheckRow>
              </Block>
              <Rule />
              <Section $h={51} $pt={12}>
                <Num>3.</Num>
                <Para $w={406}>Та цуврал захианд хэрэглэгдэх талбаруудыг өгөгдлийн<br />эхийн баганын толгойнд тохируулна уу.</Para>
                <Btn $w={135} $mt={1}><span><U>Т</U>албар олгох...</span></Btn>
              </Section>
              <Rule />
              <Block $pt={10}>
                <CheckRow>
                  <Num $w={14}>4.</Num>
                  <span>Бүх хаягийн өгөгдөл байгаа эсэхийг та шалгана уу.</span>
                </CheckRow>
                <RecordPreview $w={398} $h={79}>
                  <Record>1<br />Andreas<br />12345<br />Andreas Andreas.Andersen@nowhere.com</Record>
                </RecordPreview>
                <NavRow>
                  <NavLabel>Баримт: 1</NavLabel>
                  <NavBtn $focus><svg width="6" height="8" viewBox="0 0 6 8"><path d="M5 0v8L0 4z" fill="#111" /></svg></NavBtn>
                  <NavBtn $ml={5}><svg width="6" height="8" viewBox="0 0 6 8"><path d="M1 0v8l5-4z" fill="#111" /></svg></NavBtn>
                </NavRow>
              </Block>
            </Content>
          </DialogBody>
          <Footer>
            <Btn $w={112}><span><U>Т</U>усламж</span></Btn>
            <FooterGap />
            <Btn $w={112}><span>&lt;&lt;<U>Б</U>уцах</span></Btn>
            <FooterNarrow><Btn $w={112}><span><U>Ү</U>ргэлжлүүлэх&gt;&gt;</span></Btn></FooterNarrow>
            <Btn $w={112} $off><span><U>Д</U>уусгах</span></Btn>
            <Btn $w={112}><span>Болих</span></Btn>
          </Footer>
        </Dialog>
      </Win>
    </>
  );
}
